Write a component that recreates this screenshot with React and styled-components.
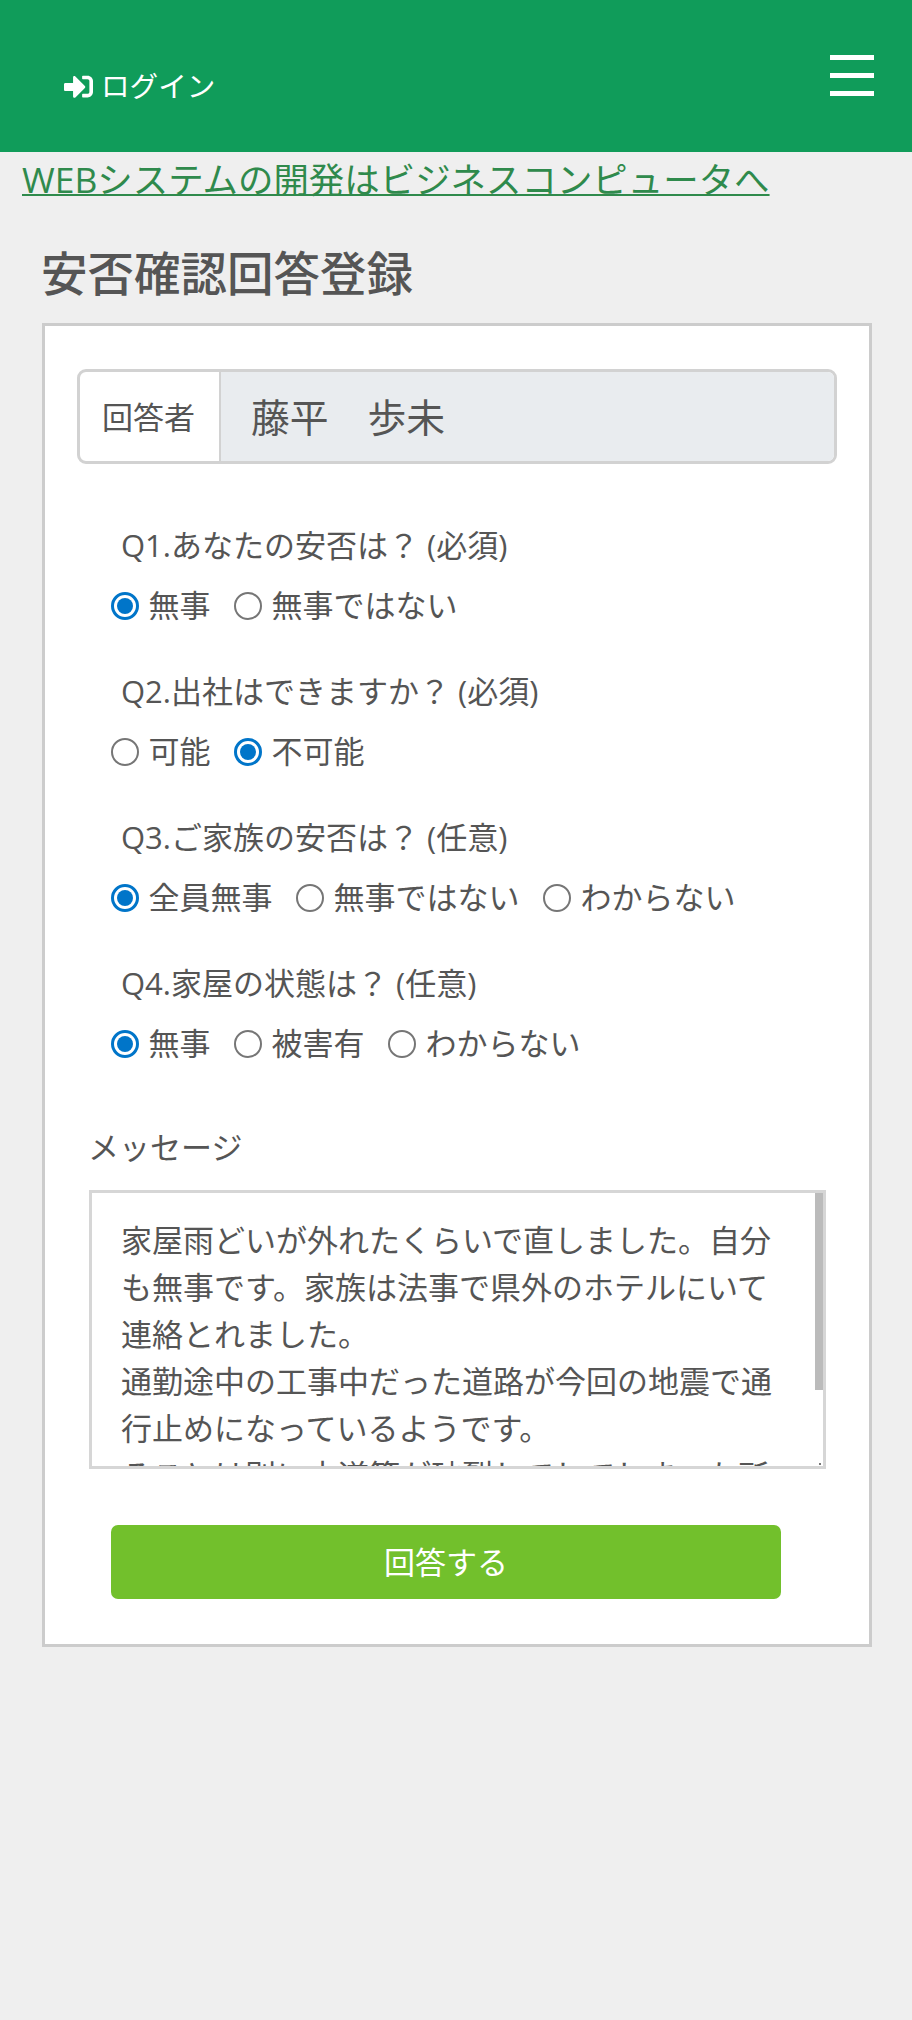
import React from "react";
import styled, { createGlobalStyle } from "styled-components";
import { FaSignInAlt } from "react-icons/fa";

const GlobalStyle = createGlobalStyle`
    html, body {
        margin: 0;
        padding: 0;
        background-color: #efefef;
    }
    * {
        box-sizing: border-box;
    }
    body {
        font-family: "Open Sans", "Noto Sans CJK JP", sans-serif;
        color: #555;
    }
`;

const Page = styled.div`
    min-height: 2020px;
`;

const Header = styled.header`
    height: 152px;
    background-color: #109c5a;
    display: flex;
    align-items: center;
    justify-content: space-between;
    padding: 0 38px 0 64px;
`;

const LoginLink = styled.a`
    display: flex;
    align-items: center;
    gap: 8px;
    margin-top: 20px;
    color: white;
    font-size: 28.6px;
    line-height: 40px;
    text-decoration: none;
`;

const MenuButton = styled.button`
    width: 44px;
    height: 41px;
    margin-bottom: 2px;
    padding: 0;
    border: none;
    background: none;
    display: flex;
    flex-direction: column;
    justify-content: space-between;
`;

const MenuBar = styled.span`
    display: block;
    height: 5px;
    background-color: white;
`;

const PromoLink = styled.a`
    display: inline-block;
    margin-left: 22px;
    color: #2f8a4c;
    font-size: 35.45px;
    line-height: 54px;
    text-decoration: underline;
    text-decoration-thickness: 2px;
`;

const Main = styled.main`
    padding: 40px 40px 0 42px;
`;

const Title = styled.h1`
    margin: 0 0 22px -1px;
    font-size: 46.5px;
    font-weight: 500;
    line-height: 55px;
    color: #555;
`;

const Card = styled.form`
    border: 3px solid #ccc;
    background-color: white;
    padding: 43px 32px 45px;
`;

const NameGroup = styled.div`
    display: flex;
    height: 95px;
    border: 3px solid #d2d2d2;
    border-radius: 9px;
    overflow: hidden;
`;

const NameLabel = styled.div`
    width: 141px;
    flex: none;
    display: flex;
    align-items: center;
    justify-content: center;
    padding: 0 2px 3px 0;
    border-right: 2px solid #d2d2d2;
    font-size: 31px;
`;

const NameValue = styled.div`
    flex: 1;
    display: flex;
    align-items: center;
    padding: 0 0 4px 30px;
    background-color: #e9ecef;
    font-size: 38.8px;
`;

const Questions = styled.div`
    margin-top: 58px;
    padding-left: 34px;
`;

const Question = styled.fieldset`
    margin: 0 0 39px;
    padding: 0;
    border: none;

    &:last-child {
        margin-bottom: 0;
    }
`;

const QuestionText = styled.div`
    margin-left: 10px;
    font-size: 31px;
    line-height: 46px;
`;

const Options = styled.div`
    display: flex;
    gap: 23.5px;
    margin-top: 15px;
`;

const Option = styled.label`
    display: flex;
    align-items: center;
    gap: 9.5px;
    height: 46px;
    font-size: 31px;
    line-height: 46px;
`;

const OptionText = styled.span`
    margin-top: -2px;
`;

const Radio = styled.input.attrs({ type: "radio" })`
    appearance: none;
    width: 28px;
    height: 28px;
    margin: 0;
    border-radius: 50%;
    border: 2px solid #767676;
    background-color: white;

    &:checked {
        border: 3px solid #0075c9;
        padding: 3px;
        background-color: #0075c9;
        background-clip: content-box;
    }
`;

const MessageBlock = styled.div`
    margin-top: 57px;
    padding: 0 11px 0 12px;
`;

const MessageLabel = styled.label`
    display: block;
    margin: 0 0 20px -1px;
    font-size: 31px;
    line-height: 46px;
`;

const MessageFrame = styled.div`
    position: relative;

    /* the scrollbar thumb */
    &::after {
        content: "";
        position: absolute;
        top: 3px;
        right: 3px;
        width: 8px;
        height: 197px;
        background-color: #bbb;
    }

    /* the resize handle's last dot */
    &::before {
        content: "";
        position: absolute;
        right: 5px;
        bottom: 4px;
        width: 2px;
        height: 2px;
        background-color: #777;
    }
`;

const MessageBox = styled.textarea`
    display: block;
    width: 100%;
    height: 279px;
    padding: 24px 37px 24px 29px;
    border: 3px solid #d6d6d6;
    border-radius: 0;
    outline: none;
    resize: none;
    overflow: hidden;
    font-family: inherit;
    font-size: 31px;
    line-height: 47px;
    color: #555;
`;

const SubmitButton = styled.button`
    display: block;
    width: 670px;
    height: 74px;
    margin: 56px 0 0 34px;
    padding: 0 0 3px;
    border: none;
    border-radius: 7px;
    background-color: #72c02c;
    color: white;
    font-family: inherit;
    font-size: 31px;
`;

const questions = [
    { name: "q1", text: "Q1.あなたの安否は？ (必須)", options: ["無事", "無事ではない"], checked: 0 },
    { name: "q2", text: "Q2.出社はできますか？ (必須)", options: ["可能", "不可能"], checked: 1 },
    { name: "q3", text: "Q3.ご家族の安否は？ (任意)", options: ["全員無事", "無事ではない", "わからない"], checked: 0 },
    { name: "q4", text: "Q4.家屋の状態は？ (任意)", options: ["無事", "被害有", "わからない"], checked: 0 },
];

const message = `家屋雨どいが外れたくらいで直しました。自分も無事です。家族は法事で県外のホテルにいて連絡とれました。
通勤途中の工事中だった道路が今回の地震で通行止めになっているようです。
そことは別に水道管が破裂してしてしまった所
もあるようです。`;

export default function App() {
    return (
        <Page>
            <GlobalStyle />
            <Header>
                <LoginLink href="#">
                    <FaSignInAlt size={29} />
                    ログイン
                </LoginLink>
                <MenuButton type="button" aria-label="menu">
                    <MenuBar />
                    <MenuBar />
                    <MenuBar />
                </MenuButton>
            </Header>
            <PromoLink href="#">WEBシステムの開発はビジネスコンピュータへ</PromoLink>
            <Main>
                <Title>安否確認回答登録</Title>
                <Card onSubmit={(e) => e.preventDefault()}>
                    <NameGroup>
                        <NameLabel>回答者</NameLabel>
                        <NameValue>藤平　歩未</NameValue>
                    </NameGroup>
                    <Questions>
                        {questions.map((q) => (
                            <Question key={q.name}>
                                <QuestionText>{q.text}</QuestionText>
                                <Options>
                                    {q.options.map((opt, i) => (
                                        <Option key={opt}>
                                            <Radio name={q.name} defaultChecked={i === q.checked} />
                                            <OptionText>{opt}</OptionText>
                                        </Option>
                                    ))}
                                </Options>
                            </Question>
                        ))}
                    </Questions>
                    <MessageBlock>
                        <MessageLabel htmlFor="message">メッセージ</MessageLabel>
                        <MessageFrame>
                            <MessageBox id="message" readOnly defaultValue={message} />
                        </MessageFrame>
                    </MessageBlock>
                    <SubmitButton type="submit">回答する</SubmitButton>
                </Card>
            </Main>
        </Page>
    );
}
